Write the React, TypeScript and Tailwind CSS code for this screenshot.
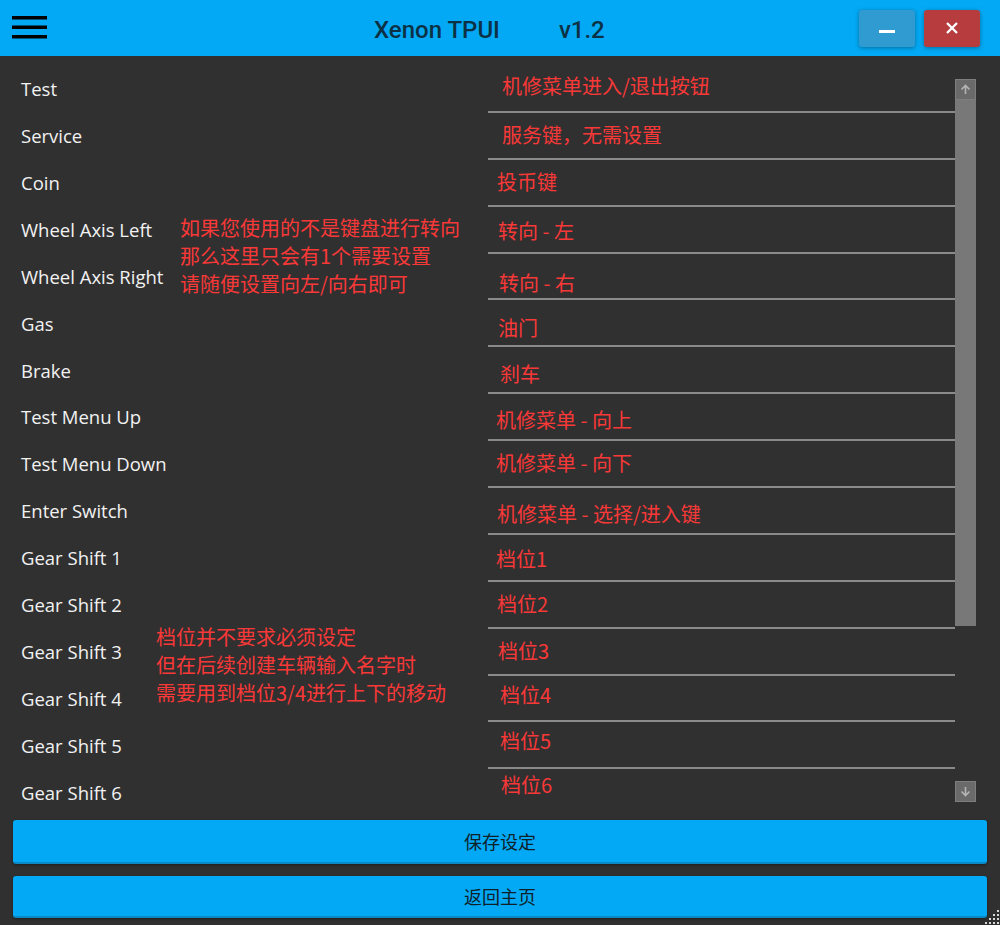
import React from 'react';

const cjk = '"Noto Sans CJK SC", "Noto Sans", sans-serif';

const labels = [
  'Test',
  'Service',
  'Coin',
  'Wheel Axis Left',
  'Wheel Axis Right',
  'Gas',
  'Brake',
  'Test Menu Up',
  'Test Menu Down',
  'Enter Switch',
  'Gear Shift 1',
  'Gear Shift 2',
  'Gear Shift 3',
  'Gear Shift 4',
  'Gear Shift 5',
  'Gear Shift 6',
];

// per-row nudges copied from the screenshot (text isn't lined up perfectly there)
const bindings = [
  { text: '机修菜单进入/退出按钮', cls: 'pl-[14px] pb-[5px]' },
  { text: '服务键，无需设置', cls: 'pl-[14px]' },
  { text: '投币键', cls: 'pl-[9px]' },
  { text: '转向 - 左', cls: 'pl-[10px] pt-[3px]' },
  { text: '转向 - 右', cls: 'pl-[11px] pt-[13px]' },
  { text: '油门', cls: 'pl-[10px] pt-[11px]' },
  { text: '刹车', cls: 'pl-[12px] pt-[9px]' },
  { text: '机修菜单 - 向上', cls: 'pl-[8px] pt-[7px]' },
  { text: '机修菜单 - 向下', cls: 'pl-[8px] pb-[1px]' },
  { text: '机修菜单 - 选择/进入键', cls: 'pl-[9px] pt-[7px]' },
  { text: '档位1', cls: 'pl-[8px] pt-[3px]' },
  { text: '档位2', cls: 'pl-[9px] pb-[1px]' },
  { text: '档位3', cls: 'pl-[10px] pb-[1px]' },
  { text: '档位4', cls: 'pl-[12px] pb-[7px]' },
  { text: '档位5', cls: 'pl-[12px] pb-[7px]' },
  { text: '档位6', cls: 'pl-[13px] pb-[13px]' },
];

function Hamburger() {
  return (
    <svg width="36" height="23" viewBox="0 0 36 23" className="block">
      <rect x="0" y="0" width="35" height="3.5" fill="#000" />
      <rect x="0" y="9.5" width="35" height="3.5" fill="#000" />
      <rect x="0" y="19" width="35" height="3.5" fill="#000" />
    </svg>
  );
}

function ScrollArrow({ up }: { up?: boolean }) {
  return (
    <div className="w-[21px] h-[21px] bg-[#6a6a6a] border border-[#7e7e7e] flex items-center justify-center">
      <svg width="11" height="11" viewBox="0 0 11 11" className={up ? '' : 'rotate-180'}>
        <path d="M5.5 10V1.5M1.5 5.5L5.5 1.5L9.5 5.5" stroke="#b4b4b4" strokeWidth="1.6" fill="none" />
      </svg>
    </div>
  );
}

function ResizeGrip() {
  const dots: [number, number][] = [];
  for (let r = 0; r < 4; r++) for (let c = 3 - r; c < 4; c++) dots.push([c * 4, r * 4]);
  return (
    <svg width="15" height="15" viewBox="0 0 15 15" className="absolute right-0 bottom-0">
      {dots.map(([x, y]) => (
        <rect key={`${x}-${y}`} x={x} y={y} width="2" height="2" fill="#d8d8d8" />
      ))}
    </svg>
  );
}

export default function App() {
  return (
    <div className="relative w-[1000px] h-[925px] bg-[#303030] flex flex-col overflow-hidden">
      {/* title bar */}
      <div className="h-[56px] shrink-0 bg-[#03a9f4] flex items-center">
        <div className="pl-[12px] pb-[2px]">
          <Hamburger />
        </div>
        <div
          className="ml-[326px] pt-[4px] flex items-center text-[24px] font-medium text-[#0c3145]"
          style={{ fontFamily: 'Roboto, sans-serif' }}
        >
          <span>Xenon TPUI</span>
          <span className="ml-[59px]">v1.2</span>
        </div>
        <div className="ml-auto mr-[20px] flex gap-[9px]">
          <button
            type="button"
            className="w-[56px] h-[37px] rounded-[3px] bg-[#2f9bd1] shadow-[0_1px_4px_rgba(0,0,0,0.35)] flex items-center justify-center"
          >
            <span className="mt-[7px] block w-[16px] h-[3px] bg-white" />
          </button>
          <button
            type="button"
            className="w-[56px] h-[37px] rounded-[3px] bg-[#b73c3e] shadow-[0_1px_4px_rgba(0,0,0,0.35)] flex items-center justify-center"
          >
            <svg width="12" height="12" viewBox="0 0 12 12">
              <path d="M1 1L11 11M11 1L1 11" stroke="#fff" strokeWidth="2.4" />
            </svg>
          </button>
        </div>
      </div>

      {/* bindings */}
      <div className="h-[764px] shrink-0 flex">
        <div
          className="relative w-[488px] pt-[10px] text-[18.5px] text-[#f2f2f2]"
          style={{ fontFamily: '"Open Sans", sans-serif' }}
        >
          {labels.map((l) => (
            <div key={l} className="h-[46.9px] pl-[21px] flex items-center leading-none">
              {l}
            </div>
          ))}

          <div
            className="absolute left-[180px] top-[158px] text-[20px] leading-[28px] text-[#f93838]"
            style={{ fontFamily: cjk }}
          >
            <div>如果您使用的不是键盘进行转向</div>
            <div>那么这里只会有1个需要设置</div>
            <div>请随便设置向左/向右即可</div>
          </div>
          <div
            className="absolute left-[156px] top-[567px] text-[20px] leading-[28px] text-[#f93838]"
            style={{ fontFamily: cjk }}
          >
            <div>档位并不要求必须设定</div>
            <div>但在后续创建车辆输入名字时</div>
            <div>需要用到档位3/4进行上下的移动</div>
          </div>
        </div>

        <div className="w-[467px] h-[746px] pt-[10px] overflow-hidden">
          {bindings.map((b) => (
            <div
              key={b.text}
              className={`h-[46.9px] border-b-2 border-[#8a8a8a] flex items-center text-[20px] leading-none text-[#f93838] ${b.cls}`}
              style={{ fontFamily: cjk }}
            >
              {b.text}
            </div>
          ))}
        </div>

        <div className="mt-[23px] w-[21px] h-[723px] flex flex-col">
          <div className="h-[547px] bg-[#787878]">
            <ScrollArrow up />
          </div>
          <div className="flex-1" />
          <ScrollArrow />
        </div>
      </div>

      {/* actions */}
      <div className="flex flex-col gap-[12px] px-[13px] text-[18px] text-[#0f2029]" style={{ fontFamily: cjk }}>
        <button
          type="button"
          className="h-[44px] rounded-[3px] bg-[#03a9f4] border-b-2 border-[#0a8ac4] shadow-[0_1px_3px_rgba(0,0,0,0.4)] flex items-center justify-center"
        >
          保存设定
        </button>
        <button
          type="button"
          className="h-[42px] rounded-[3px] bg-[#03a9f4] border-b-2 border-[#0a8ac4] shadow-[0_1px_3px_rgba(0,0,0,0.4)] flex items-center justify-center"
        >
          返回主页
        </button>
      </div>

      <ResizeGrip />
    </div>
  );
}
